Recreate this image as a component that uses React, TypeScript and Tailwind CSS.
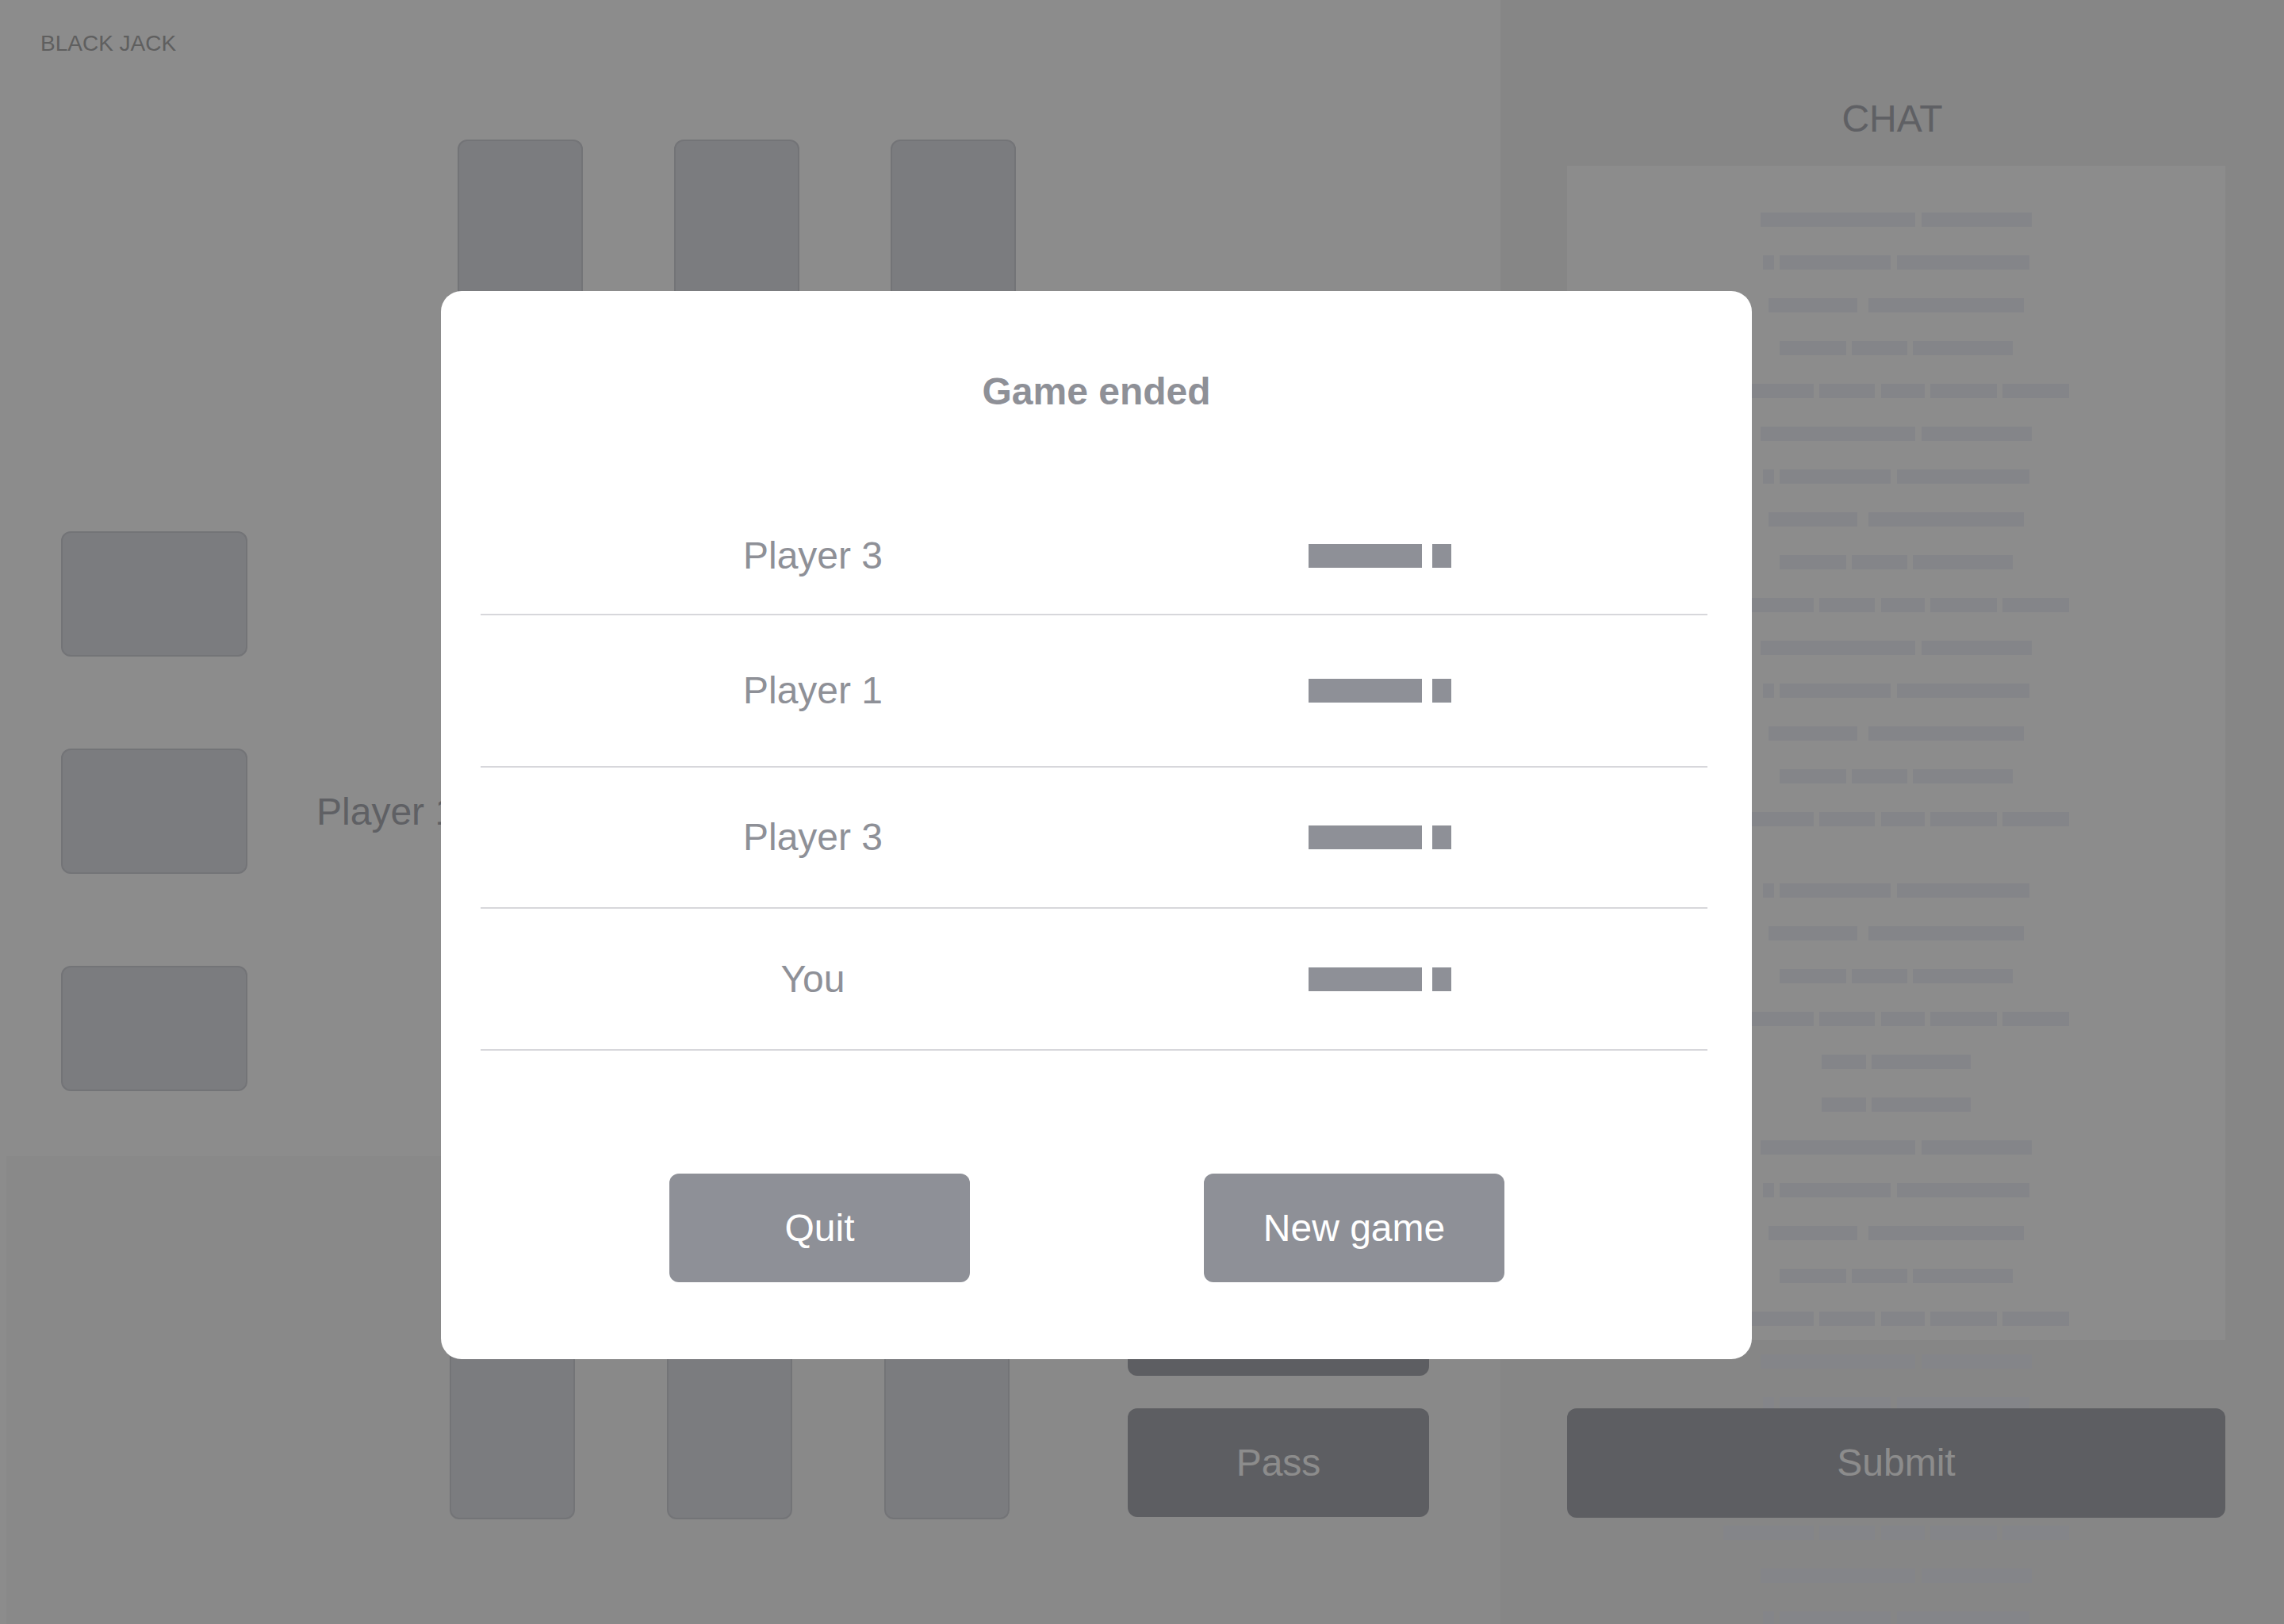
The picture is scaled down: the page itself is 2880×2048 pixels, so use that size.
import React from "react";

type Seg = [number, number]; // [width, gap before]

const LINE_SHAPES: Record<string, Seg[]> = {
  A: [[195, 0], [139, 8]],
  B: [[14, 0], [140, 7], [167, 8]],
  C: [[112, 0], [196, 14]],
  D: [[84, 0], [70, 7], [126, 7]],
  E: [[114, 0], [70, 7], [55, 8], [84, 7], [84, 7]],
  F: [[56, 0], [125, 7]],
};

// chat "messages" (wireframe text bars), "-" is an empty spacer line
const CHAT_LINES = "ABCDEABCDEABCDE-BCDEFFABCDEABCDEAB".split("");

const results = [
  { name: "Player 3", h: "h-[148px]" },
  { name: "Player 1", h: "h-[192px]" },
  { name: "Player 3", h: "h-[178px]" },
  { name: "You", h: "h-[179px]" },
];

function Card({ landscape = false }: { landscape?: boolean }) {
  return (
    <div
      className={
        landscape
          ? "w-[235px] h-[158px] rounded-[12px] border-2 border-[#d2d3d9] bg-[#e0e2e7]"
          : "w-[158px] h-[235px] rounded-[12px] border-2 border-[#d2d3d9] bg-[#e0e2e7]"
      }
    />
  );
}

function ChatLine({ shape }: { shape: string }) {
  if (shape === "-") return <div className="h-[36px]" />;
  return (
    <div className="h-[54px] flex items-center justify-center">
      {LINE_SHAPES[shape].map(([w, gap], i) => (
        <div
          key={i}
          className="h-[18px] bg-[#f0f2f9]"
          style={{ width: w, marginLeft: gap }}
        />
      ))}
    </div>
  );
}

export default function App() {
  return (
    <div className="relative w-[2880px] h-[2048px] overflow-hidden flex font-['Liberation_Sans',Arial,sans-serif]">
      {/* game table */}
      <div className="w-[1892px] h-full flex flex-col bg-white">
        <div className="pt-[41px] pl-[51px] text-[28px] leading-none text-[#adadad]">
          BLACK JACK
        </div>

        <div className="mt-[107px] pl-[577px] flex gap-[115px]">
          <Card />
          <Card />
          <Card />
        </div>

        <div className="mt-[259px] pl-[77px] flex items-center">
          <div className="flex flex-col gap-[116px]">
            <Card landscape />
            <Card landscape />
            <Card landscape />
          </div>
          <div className="ml-[87px] mt-[2px] text-[48px] leading-none text-[#adafb6]">
            Player 1
          </div>
        </div>

        <div className="mt-[82px] ml-[8px] flex-1 bg-[#f9f9f9] pl-[559px] pt-[223px] flex items-start">
          <div className="flex gap-[116px]">
            <Card />
            <Card />
            <Card />
          </div>
          <div className="ml-[149px] -mt-[83px] flex flex-col gap-[41px]">
            <button className="w-[380px] h-[137px] rounded-[12px] bg-[#a9abb2] text-white text-[48px]">
              Hit
            </button>
            <button className="w-[380px] h-[137px] rounded-[12px] bg-[#a9abb2] text-white text-[48px]">
              Pass
            </button>
          </div>
        </div>
      </div>

      {/* chat */}
      <div className="w-[988px] h-full bg-[#f4f4f4] flex flex-col">
        <div className="pt-[126px] text-center text-[48px] leading-none text-[#adafb6]">
          CHAT
        </div>
        <div className="mt-[35px] ml-[84px] w-[830px] h-[1481px] shrink-0 bg-white pt-[41px]">
          {CHAT_LINES.map((s, i) => (
            <ChatLine key={i} shape={s} />
          ))}
        </div>
        <button className="relative mt-[86px] ml-[84px] w-[830px] h-[138px] shrink-0 rounded-[12px] bg-[#a9abb2] text-white text-[48px]">
          Submit
        </button>
      </div>

      {/* modal */}
      <div className="fixed inset-0 bg-black/45" />
      <div className="absolute left-[556px] top-[367px] w-[1653px] h-[1347px] rounded-[26px] bg-white flex flex-col">
        <h2 className="pt-[103px] text-center text-[48px] leading-none font-bold text-[#8e9097]">
          Game ended
        </h2>

        <div className="mt-[110px] ml-[50px] mr-[56px]">
          {results.map((r, i) => (
            <div
              key={i}
              className={`${r.h} grid grid-cols-[838px_1fr] items-center border-b-2 border-[#d7d7db]`}
            >
              <div className="text-center text-[48px] leading-none text-[#8e9097]">
                {r.name}
              </div>
              <div className="pl-[206px] flex gap-[13px]">
                <div className="w-[143px] h-[30px] bg-[#8e9097]" />
                <div className="w-[24px] h-[30px] bg-[#8e9097]" />
              </div>
            </div>
          ))}
        </div>

        <div className="mt-[155px] pr-[24px] flex justify-center gap-[295px]">
          <button className="w-[379px] h-[137px] rounded-[12px] bg-[#8e9097] text-white text-[48px]">
            Quit
          </button>
          <button className="w-[379px] h-[137px] rounded-[12px] bg-[#8e9097] text-white text-[48px]">
            New game
          </button>
        </div>
      </div>
    </div>
  );
}
